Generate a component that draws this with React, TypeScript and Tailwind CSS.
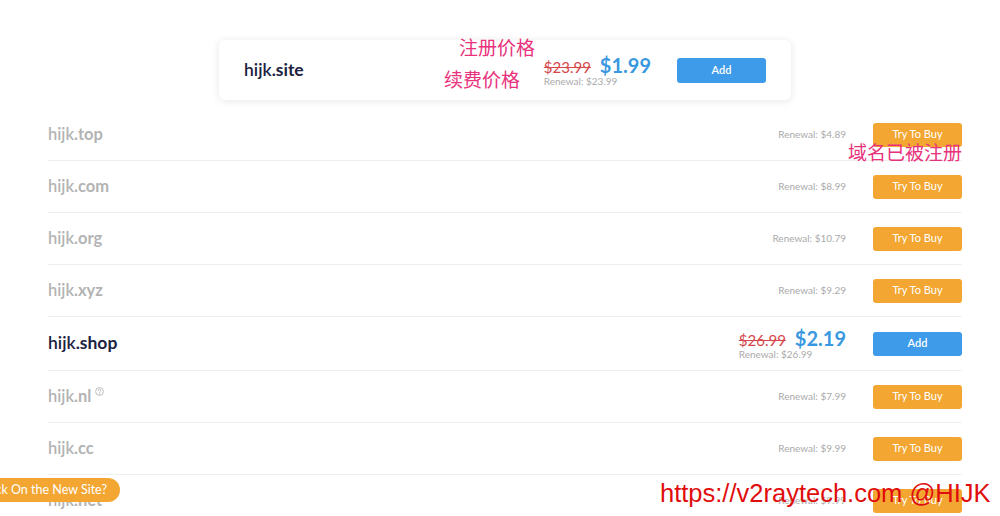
import React from "react";

type Row = { name: string; tld: string; renewal: string; taken: boolean; old?: string; price?: string; help?: boolean };

const rows: Row[] = [
  { name: "hijk", tld: ".top", renewal: "$4.89", taken: true },
  { name: "hijk", tld: ".com", renewal: "$8.99", taken: true },
  { name: "hijk", tld: ".org", renewal: "$10.79", taken: true },
  { name: "hijk", tld: ".xyz", renewal: "$9.29", taken: true },
  { name: "hijk", tld: ".shop", renewal: "$26.99", taken: false, old: "$26.99", price: "$2.19" },
  { name: "hijk", tld: ".nl", renewal: "$7.99", taken: true, help: true },
  { name: "hijk", tld: ".cc", renewal: "$9.99", taken: true },
  { name: "hijk", tld: ".net", renewal: "$9.99", taken: true },
];

const font = { fontFamily: "Lato, 'Noto Sans', sans-serif" };
const cjk = "font-['Noto_Sans_CJK_SC',sans-serif]";

function HelpIcon() {
  return (
    <svg width="9" height="9" viewBox="0 0 12 12" className="ml-[4px] -mt-[10px]" fill="none" stroke="#b5b5b5" strokeWidth="1.2">
      <circle cx="6" cy="6" r="5.2" />
      <path d="M4.4 4.6a1.6 1.6 0 1 1 2.3 1.4c-.5.3-.7.6-.7 1.1" strokeLinecap="round" />
      <circle cx="6" cy="8.9" r="0.4" fill="#b5b5b5" />
    </svg>
  );
}

export default function App() {
  return (
    <div className="relative w-[1000px] h-[516px] overflow-hidden bg-white font-['Lato',sans-serif]" style={font}>
      <div className="pt-[40px]">
        <div className="ml-[219px] w-[572px] h-[60px] rounded-[6px] bg-white shadow-[0_1px_8px_rgba(0,0,0,0.10)] flex items-center pl-[25px] pr-[25px]">
          <div className="text-[17.5px] text-[#1c2140] font-bold">
            <span className="font-semibold">hijk</span>.site
          </div>
          <div className="ml-auto flex flex-col">
            <div className="flex items-baseline leading-none">
              <span className="text-[15px] text-[#d5474b] line-through">$23.99</span>
              <span className="ml-[9px] text-[20px] font-bold text-[#3a98e0]">$1.99</span>
            </div>
            <span className="text-[10px] text-[#aaaaaa] leading-none mt-[1px]">Renewal: $23.99</span>
          </div>
          <button className="ml-[26px] w-[89px] h-[25px] rounded-[3px] bg-[#3d9be9] text-white text-[11px] font-semibold">Add</button>
        </div>

        <div className="mt-[9px] pl-[48px] pr-[38px]">
          {rows.map((r, i) => (
            <div
              key={i}
              className={`flex items-center border-b border-[#efefef] ${r.taken ? "h-[52px]" : "h-[54px]"}`}
            >
              <div className={`flex items-center ${r.taken ? "text-[16.5px] text-[#b3b3b3]" : "text-[17.5px] text-[#1c2140]"} font-bold`}>
                <span className="font-semibold">{r.name}</span>
                <span>{r.tld}</span>
                {r.help && <HelpIcon />}
              </div>
              {r.taken ? (
                <span className="ml-auto text-[10px] text-[#aaaaaa]">Renewal: {r.renewal}</span>
              ) : (
                <div className="ml-auto flex flex-col">
                  <div className="flex items-baseline leading-none">
                    <span className="text-[15px] text-[#d5474b] line-through">{r.old}</span>
                    <span className="ml-[9px] text-[20px] font-bold text-[#3a98e0]">{r.price}</span>
                  </div>
                  <span className="text-[10px] text-[#aaaaaa] leading-none mt-[1px]">Renewal: {r.renewal}</span>
                </div>
              )}
              {r.taken ? (
                <button className="ml-[27px] w-[89px] h-[24px] rounded-[3px] bg-[#f3a632] text-white text-[11px]">Try To Buy</button>
              ) : (
                <button className="ml-[27px] w-[89px] h-[24px] rounded-[3px] bg-[#3d9be9] text-white text-[11px] font-semibold">Add</button>
              )}
            </div>
          ))}
        </div>
      </div>

      <div className={`absolute left-[459px] top-[35px] text-[19px] leading-[24px] text-[#e8327c] ${cjk}`}>注册价格</div>
      <div className={`absolute left-[444px] top-[67px] text-[19px] leading-[24px] text-[#e8327c] ${cjk}`}>续费价格</div>
      <div className={`absolute left-[848px] top-[140px] text-[19px] leading-[24px] text-[#e8327c] ${cjk}`}>域名已被注册</div>

      <div className="absolute right-[880px] top-[478px] h-[24px] pl-[14px] pr-[13px] rounded-full bg-[#f3a632] text-white text-[12.5px] flex items-center whitespace-nowrap">
        Feedback On the New Site?
      </div>

      <div className="absolute left-[660px] top-[478px] text-[25.5px] leading-[30px] text-[#e00d0d] font-['Liberation_Sans',Arial,sans-serif] whitespace-nowrap">
        https://v2raytech.com @HIJK
      </div>
    </div>
  );
}
